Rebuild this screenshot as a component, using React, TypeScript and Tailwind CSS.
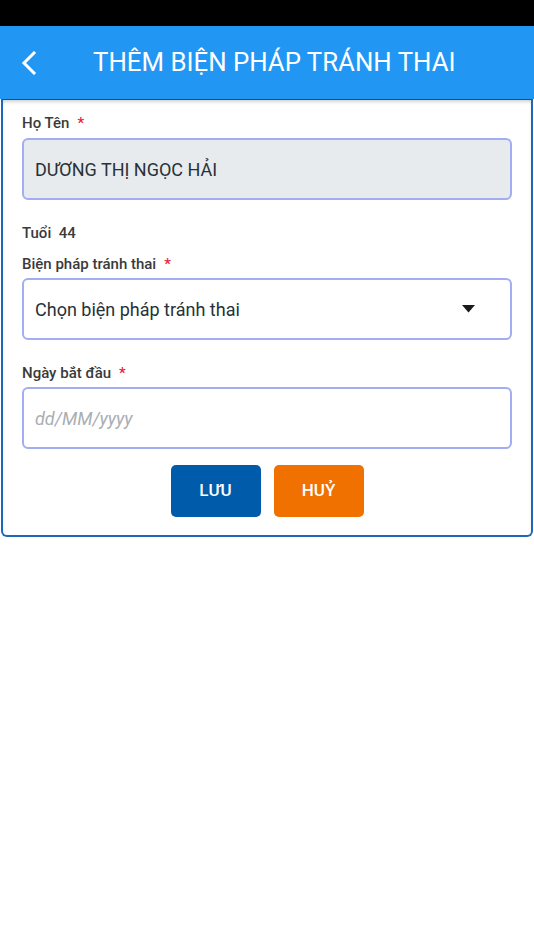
import { useState } from "react";

const font = { fontFamily: "Roboto, 'Noto Sans', sans-serif" };

function Label({ text, required }: { text: string; required?: boolean }) {
  return (
    <p className="text-[15px] font-medium leading-5 text-[#3a3a3a]">
      {text}
      {required && <span className="ml-2 text-[#ee1c3a]">*</span>}
    </p>
  );
}

export default function App() {
  const [date, setDate] = useState("");

  return (
    <div className="min-h-[950px] bg-white" style={font}>
      <div className="h-[26px] bg-black" />

      <header className="flex h-[73px] items-center bg-[#2196f3] px-5">
        <button className="flex h-8 w-6 items-center">
          <svg width="18" height="24" viewBox="0 0 18 24" fill="none">
            <path
              d="M14 2 L4 12 L14 22"
              stroke="white"
              strokeWidth="3"
              strokeLinecap="square"
            />
          </svg>
        </button>
        <h1 className="ml-[49px] text-[25.8px] font-normal text-white">
          THÊM BIỆN PHÁP TRÁNH THAI
        </h1>
      </header>

      <section className="mx-px rounded-b-md border-2 border-t border-[#1d69b8] border-t-[#1b4f87] bg-white px-[19px] pb-[18px] pt-[13px] shadow-[inset_0_3px_4px_-2px_rgba(0,0,0,0.25)]">
        <Label text="Họ Tên" required />
        <div className="mt-[5px] flex h-[62px] items-center rounded-md border-2 border-[#a3adf2] bg-[#e8ebee] px-[11px] text-[18px] text-[#263238]">
          DƯƠNG THỊ NGỌC HẢI
        </div>

        <p className="mt-[23px] text-[15px] font-medium leading-5 text-[#3a3a3a]">
          Tuổi&nbsp; 44
        </p>

        <div className="mt-[11px]">
          <Label text="Biện pháp tránh thai" required />
        </div>
        <div className="mt-[4px] flex h-[62px] items-center justify-between rounded-md border-2 border-[#a3adf2] bg-white pl-[11px] pr-[35px] text-[18px] text-[#263238]">
          <span>Chọn biện pháp tránh thai</span>
          <svg width="13" height="8" viewBox="0 0 13 8">
            <path d="M0 0 H13 L6.5 7.5 Z" fill="#1a1a1a" />
          </svg>
        </div>

        <div className="mt-[23px]">
          <Label text="Ngày bắt đầu" required />
        </div>
        <input
          value={date}
          onChange={(e) => setDate(e.target.value)}
          placeholder="dd/MM/yyyy"
          className="mt-[4px] h-[62px] w-full rounded-md border-2 border-[#a3adf2] bg-white px-[11px] text-[18px] text-[#263238] outline-none placeholder:italic placeholder:text-[#a9aeb3]"
        />

        <div className="mt-4 flex justify-center gap-[13px]">
          <button className="h-[52px] w-[90px] rounded-[5px] bg-[#005bab] text-[17px] font-medium text-white">
            LƯU
          </button>
          <button className="h-[52px] w-[90px] rounded-[5px] bg-[#f07000] text-[17px] font-medium text-white">
            HUỶ
          </button>
        </div>
      </section>
    </div>
  );
}
